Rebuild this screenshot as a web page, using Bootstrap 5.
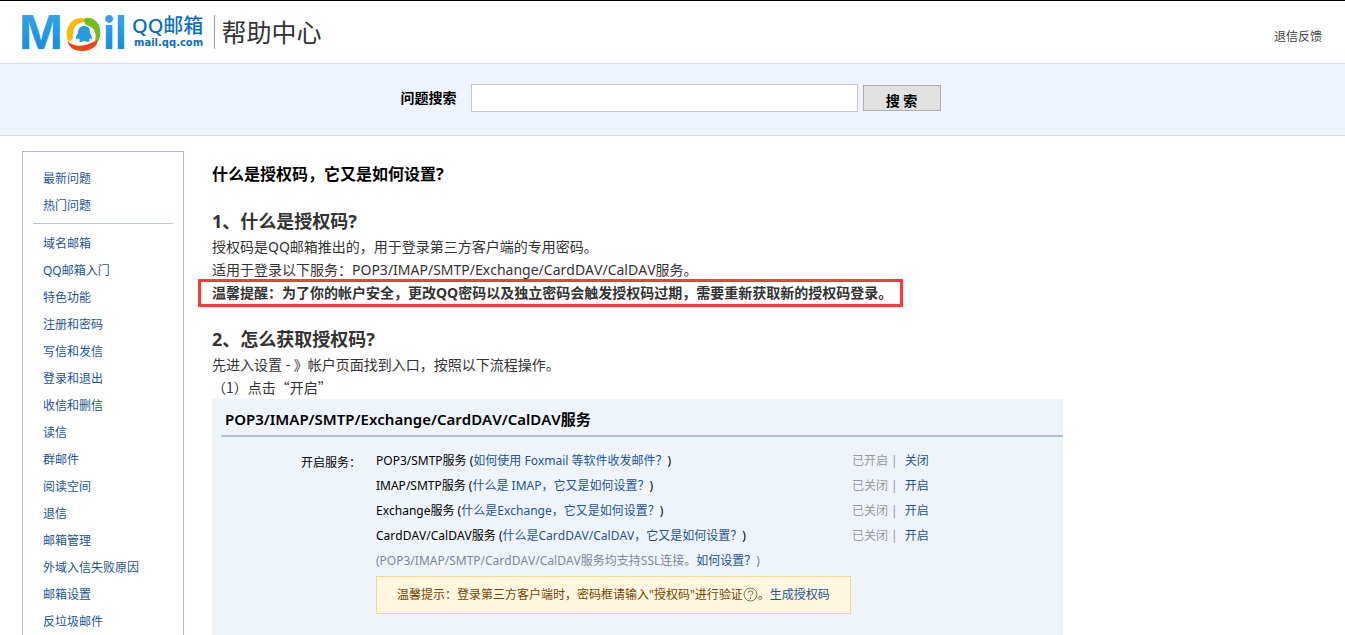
<!DOCTYPE html>
<html lang="zh-CN">
<head>
<meta charset="utf-8">
<meta name="viewport" content="width=device-width, initial-scale=1">
<title>QQ邮箱帮助中心</title>
<link href="https://cdn.jsdelivr.net/npm/bootstrap@5.3.0/dist/css/bootstrap.min.css" rel="stylesheet">
<style>
body { font: 14px/22px "Noto Sans", "Noto Sans CJK SC", sans-serif; font-kerning: none; color: #333; background: #fff; }
a { color: #1d5494; text-decoration: none; }
a:hover { text-decoration: underline; }
.site-header { border-top: 1px solid #000; height: 63px; padding: 0 23px 0 22px; }
.brand { color: #0d6fc0; }
.brand-name { font-size: 20px; line-height: 22px; font-weight: 500; }
.brand-host { font: 700 10px/12px "DejaVu Sans", sans-serif; padding-left: 2px; }
.brand-title { font-size: 25px; line-height: 34px; color: #333; border-left: 1px solid #999; padding-left: 6px; margin-left: 11px; }
.feedback { font-size: 12px; color: #444; padding-top: 10px; }
.search-band { background: #eff4fc; border-top: 1px solid #d5dfec; border-bottom: 1px solid #d5dbe8; height: 73px; padding: 0 4px 4px 0; }
.search-band label { color: #000; font-weight: 700; margin-right: 14px; }
.search-box { width: 387px; height: 28px; border: 1px solid #c7c7c7; border-radius: 0; padding: 2px 6px; margin-right: 5px; }
.search-btn { width: 78px; height: 26px; border: 1px solid #adadad; border-radius: 0; background: #e1e1e1; color: #000; font-weight: 700; font-size: 14px; line-height: 20px; padding: 5px 0 0; }
.page-body { padding: 15px 22px 0; gap: 28px; }
.side-nav { flex: 0 0 162px; border: 1px solid #a3bad9; border-bottom: 0; padding: 13px 10px 0; font-size: 12px; line-height: 27px; }
.side-nav a { display: block; padding-left: 10px; }
.side-nav hr { margin: 4px 0 6px; border-color: #b9c9d0; opacity: 1; }
.article-title { font-size: 16px; line-height: 24px; font-weight: 700; color: #000; margin: 11px 0 21px; }
.section-title { font-size: 18px; line-height: 28px; font-weight: 700; margin: 0; }
.article p { margin: 0; line-height: 23px; }
.article .notice { border: 3px solid #fb3b3b; font-weight: 700; line-height: 22px; width: fit-content; margin: -2px 0 18px -14px; padding: 0 8px 0 11px; }
.article .step { font-family: "Noto Sans CJK SC", sans-serif; }
.service-panel { background: #eff4fb; max-width: 851px; padding: 4px 0 20px 9px; font-size: 12px; color: #000; }
.service-title { font-size: 15px; line-height: 32px; font-weight: 600; margin: 0; padding-left: 4px; border-bottom: 2px solid #a8c5e5; }
.service-body { padding: 11px 0 0 80px; line-height: 25px; }
.service-label { flex: 0 0 75px; padding-top: 2px; }
.service-name { flex: 0 0 476px; }
.service-state { color: #999; }
.service-state a { margin-left: 4px; }
.service-note { color: #7d879b; }
.tip { background: #fff8e0; border: 1px solid #f3d78b; color: #744200; width: fit-content; line-height: 36px; padding: 0 20px; margin-top: 3px; }
.help-dot { width: 15px; height: 15px; vertical-align: -3px; }
</style>
</head>
<body class="d-flex flex-column min-vh-100">
<header class="site-header d-flex align-items-center justify-content-between">
  <div class="d-flex align-items-center brand">
    <svg width="106" height="60" viewBox="0 -10 106 60" overflow="visible" role="img" aria-label="Mail">
      <defs><linearGradient id="sky" x1="0" y1="0" x2="0" y2="1"><stop offset="0.2" stop-color="#35a4e4"/><stop offset="0.8" stop-color="#168fdd"/></linearGradient></defs>
      <g fill="url(#sky)"><text x="-3" y="37" font-family="Inter" font-weight="700" font-size="47">M</text><text x="81" y="37" font-family="Lato" font-weight="900" font-size="46">il</text></g>
      <path d="M59 6C48 6 42 18 46 29Q49 30 51 26C50 17 53 10 65 10Q63 6 59 6Z" fill="#f9b80c"/>
      <path d="M64 6C74 4 83 17 76 30L73 30C75 20 72 15 64 13Q60 7 64 6Z" fill="#72be20"/>
      <path d="M46 29C51 35 61 36 75 28C77 34 68 39 60 39C51 39 46 34 46 29Z" fill="#f24313"/>
      <path d="M62 14C57 14 56 18 56 21Q53 25 54 27Q56 28 56 26L58 28Q56 30 59 30L62 29L66 30Q69 29 67 28L68 26Q70 29 70 26Q70 24 68 21C68 17 67 14 62 14Z" fill="#259ce2"/>
    </svg>
    <div class="ms-1"><div class="brand-name">QQ邮箱</div><div class="brand-host">mail.qq.com</div></div>
    <div class="brand-title">帮助中心</div>
  </div>
  <a class="feedback" href="#">退信反馈</a>
</header>
<form class="search-band d-flex align-items-center justify-content-center">
  <label for="question">问题搜索</label>
  <input class="search-box" type="text" id="question">
  <button class="search-btn" type="button">搜 索</button>
</form>
<div class="page-body d-flex flex-grow-1">
  <nav class="side-nav">
    <a href="#">最新问题</a><a href="#">热门问题</a>
    <hr>
    <a href="#">域名邮箱</a><a href="#">QQ邮箱入门</a><a href="#">特色功能</a><a href="#">注册和密码</a><a href="#">写信和发信</a><a href="#">登录和退出</a><a href="#">收信和删信</a><a href="#">读信</a><a href="#">群邮件</a><a href="#">阅读空间</a><a href="#">退信</a><a href="#">邮箱管理</a><a href="#">外域入信失败原因</a><a href="#">邮箱设置</a><a href="#">反垃圾邮件</a>
  </nav>
  <main class="article d-flex flex-column flex-grow-1">
    <h1 class="article-title">什么是授权码，它又是如何设置?</h1>
    <h2 class="section-title">1、什么是授权码?</h2>
    <p>授权码是QQ邮箱推出的，用于登录第三方客户端的专用密码。</p>
    <p>适用于登录以下服务：POP3/IMAP/SMTP/Exchange/CardDAV/CalDAV服务。</p>
    <p class="notice">温馨提醒：为了你的帐户安全，更改QQ密码以及独立密码会触发授权码过期，需要重新获取新的授权码登录。</p>
    <h2 class="section-title">2、怎么获取授权码?</h2>
    <p>先进入设置 - 》帐户页面找到入口，按照以下流程操作。</p>
    <p class="step">（1）点击“开启”</p>
    <section class="service-panel flex-grow-1">
      <h3 class="service-title">POP3/IMAP/SMTP/Exchange/CardDAV/CalDAV服务</h3>
      <div class="service-body d-flex">
        <div class="service-label">开启服务：</div>
        <div>
          <div class="d-flex"><div class="service-name">POP3/SMTP服务 (<a href="#">如何使用 Foxmail 等软件收发邮件？</a>)</div><div class="service-state">已开启 | <a href="#">关闭</a></div></div>
          <div class="d-flex"><div class="service-name">IMAP/SMTP服务 (<a href="#">什么是 IMAP，它又是如何设置？</a>)</div><div class="service-state">已关闭 | <a href="#">开启</a></div></div>
          <div class="d-flex"><div class="service-name">Exchange服务 (<a href="#">什么是Exchange，它又是如何设置？</a>)</div><div class="service-state">已关闭 | <a href="#">开启</a></div></div>
          <div class="d-flex"><div class="service-name">CardDAV/CalDAV服务 (<a href="#">什么是CardDAV/CalDAV，它又是如何设置？</a>)</div><div class="service-state">已关闭 | <a href="#">开启</a></div></div>
          <div class="service-note">(POP3/IMAP/SMTP/CardDAV/CalDAV服务均支持SSL连接。<a href="#">如何设置？</a>)</div>
          <div class="tip">温馨提示：登录第三方客户端时，密码框请输入"授权码"进行验证<svg class="help-dot" viewBox="0 0 15 15" fill="none" stroke="#80764f"><circle cx="7.500" cy="7.500" r="6.500"/><path d="M5 6Q5 4 7.500 4Q10 4 10 6Q10 7 8.500 8Q7.500 8.500 7.500 9.500M7.500 10.500V12"/></svg>。<a href="#">生成授权码</a></div>
        </div>
      </div>
    </section>
  </main>
</div>
<script src="https://cdn.jsdelivr.net/npm/bootstrap@5.3.0/dist/js/bootstrap.bundle.min.js"></script>
</body>
</html>
